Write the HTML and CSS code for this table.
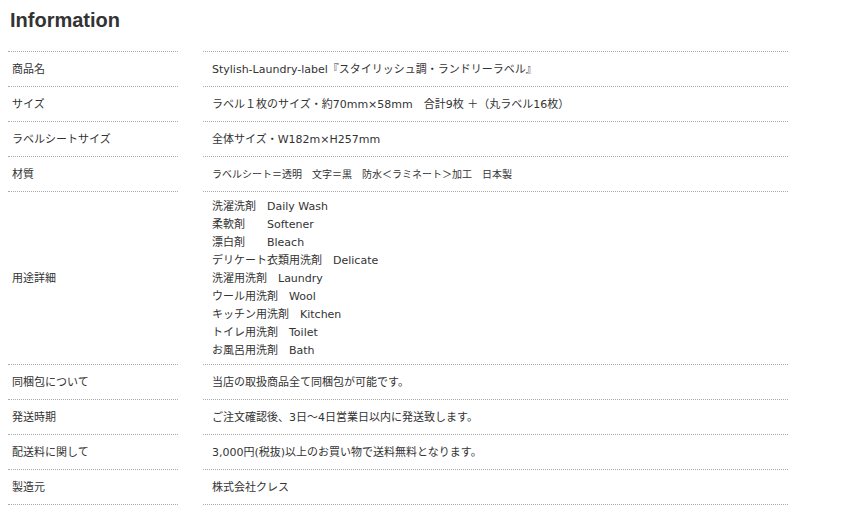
FILE: index.html
```html
<!DOCTYPE html>
<html lang="ja">
<head>
<meta charset="utf-8">
<title>Information</title>
<link rel="stylesheet" href="styles.css">
</head>
<body>
<div class="page">
  <h2 class="title">Information</h2>
  <div class="spec">
    <div class="label first">商品名</div>
    <div class="value first">Stylish-Laundry-label『スタイリッシュ調・ランドリーラベル』</div>

    <div class="label">サイズ</div>
    <div class="value">ラベル１枚のサイズ・約70mm×58mm　合計9枚 ＋（丸ラベル16枚）</div>

    <div class="label">ラベルシートサイズ</div>
    <div class="value">全体サイズ・W182m×H257mm</div>

    <div class="label">材質</div>
    <div class="value small">ラベルシート＝透明　文字＝黒　防水＜ラミネート＞加工　日本製</div>

    <div class="label">用途詳細</div>
    <div class="value list">洗濯洗剤　Daily Wash<br>柔軟剤　　Softener<br>漂白剤　　Bleach<br>デリケート衣類用洗剤　Delicate<br>洗濯用洗剤　Laundry<br>ウール用洗剤　Wool<br>キッチン用洗剤　Kitchen<br>トイレ用洗剤　Toilet<br>お風呂用洗剤　Bath</div>

    <div class="label">同梱包について</div>
    <div class="value">当店の取扱商品全て同梱包が可能です。</div>

    <div class="label">発送時期</div>
    <div class="value">ご注文確認後、3日～4日営業日以内に発送致します。</div>

    <div class="label">配送料に関して</div>
    <div class="value">3,000円(税抜)以上のお買い物で送料無料となります。</div>

    <div class="label">製造元</div>
    <div class="value">株式会社クレス</div>
  </div>
</div>
</body>
</html>
```

FILE: styles.css
```css
html, body {
  margin: 0;
  padding: 0;
  background: #fff;
}

.page {
  padding: 8px;
  font-family: "DejaVu Sans", "Noto Sans CJK JP", sans-serif;
  font-size: 11px;
  line-height: 18px;
  color: #333;
}

.title {
  margin: 0 0 19px 2px;
  font-family: "Liberation Sans", sans-serif;
  font-size: 20px;
  line-height: 24px;
  font-weight: bold;
  color: #333;
}

.spec {
  display: grid;
  grid-template-columns: 170px 585px;
  column-gap: 25px;
}

.label,
.value {
  border-bottom: 1px dotted #aaa;
  padding: 9px 0 7px;
  display: flex;
  align-items: center;
}

.label {
  padding-left: 4px;
}

.value {
  padding-left: 9px;
}

.first {
  border-top: 1px dotted #aaa;
}

.small {
  font-size: 10px;
}

.list {
  display: block;
  padding-top: 6px;
  padding-bottom: 4px;
}
```
